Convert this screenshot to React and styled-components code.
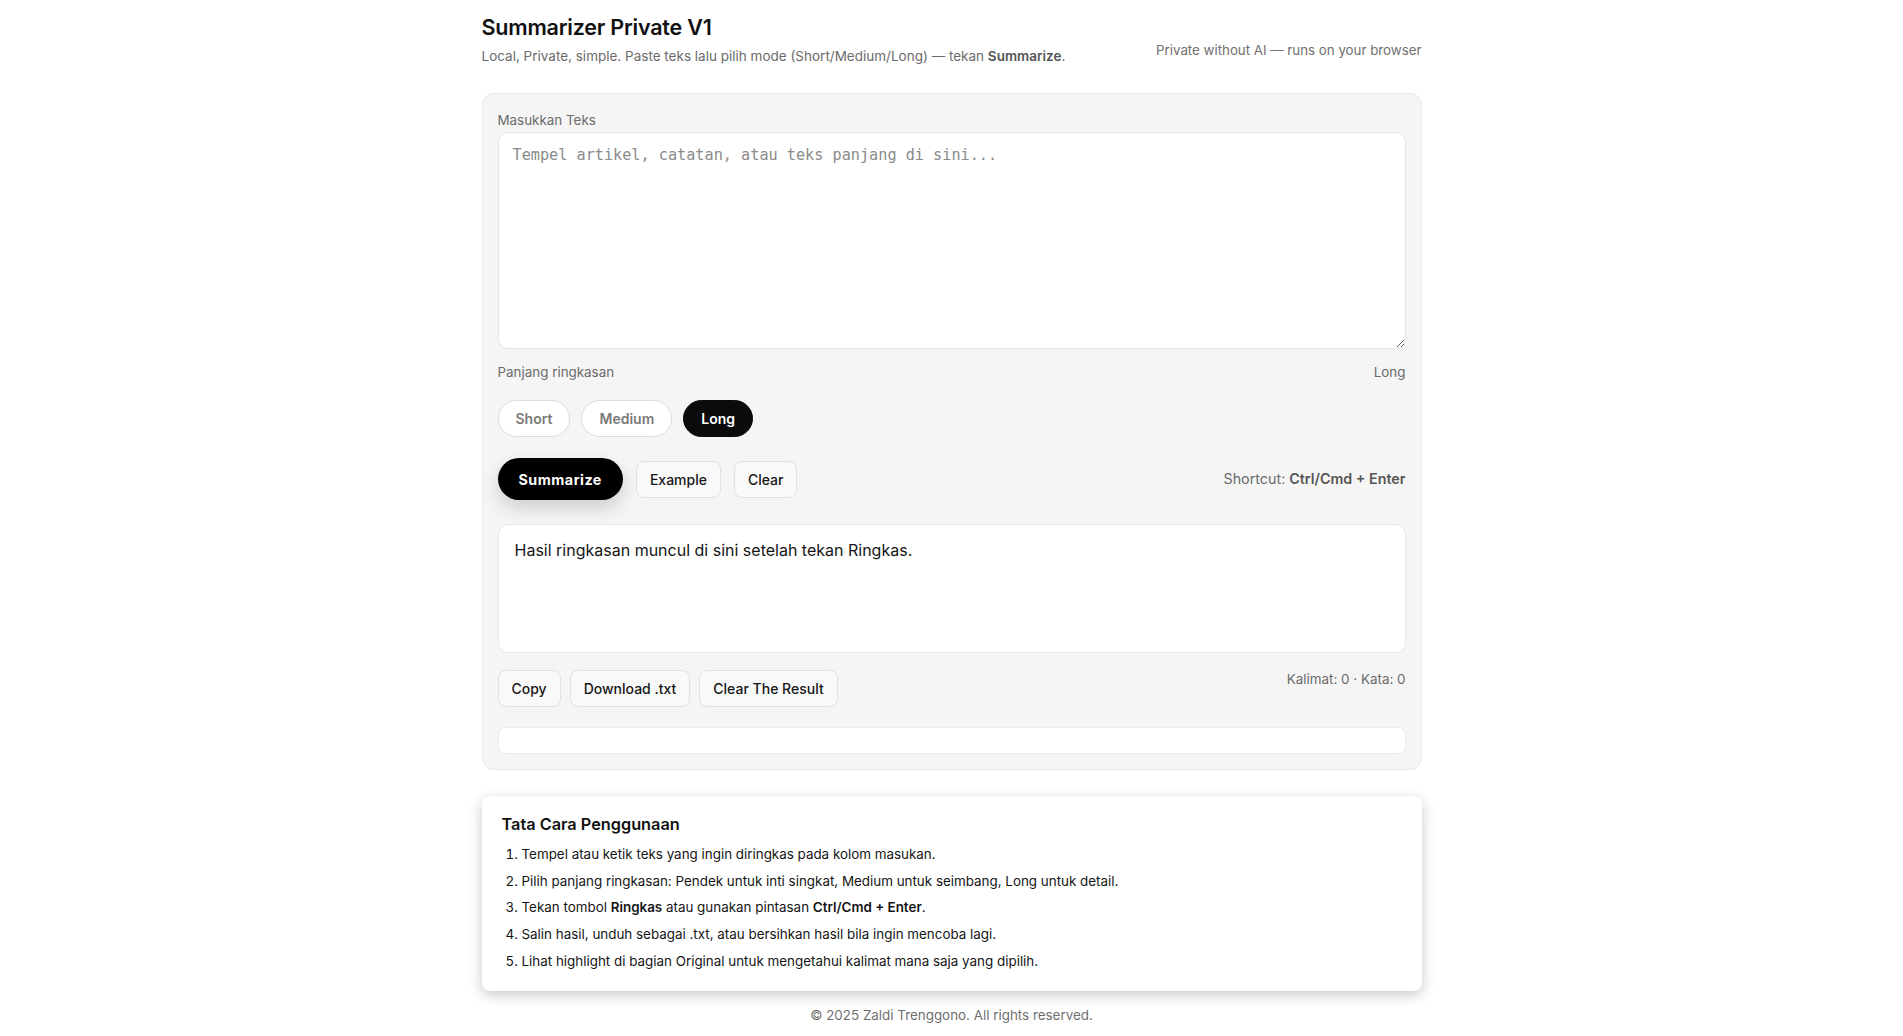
import React, { useState } from "react";
import styled, { createGlobalStyle } from "styled-components";

const GlobalStyle = createGlobalStyle`
  * { box-sizing: border-box; }
  body {
    margin: 0;
    background: #ffffff;
    color: #111111;
    font-family: Inter, "Noto Sans", "Liberation Sans", sans-serif;
  }
`;

const Page = styled.div`
  width: 940px;
  margin: 0 auto;
  padding: 14px 0 14px;
`;

const Header = styled.header`
  display: flex;
  justify-content: space-between;
  align-items: flex-end;
  margin-bottom: 28px;
`;

const Title = styled.h1`
  margin: 0 0 7px;
  font-size: 21.5px;
  line-height: 26px;
  font-weight: 600;
  letter-spacing: -0.2px;
`;

const Subtitle = styled.p`
  margin: 0;
  font-size: 13.5px;
  line-height: 18px;
  color: #6b6b6b;

  b {
    font-weight: 600;
    color: #555;
  }
`;

const Badge = styled.div`
  font-size: 13.3px;
  line-height: 18px;
  color: #707070;
  margin-bottom: 6px;
`;

const Panel = styled.section`
  background: #f5f5f5;
  border: 1px solid #e9e9e9;
  border-radius: 12px;
  padding: 17px 15px 15px;
`;

const Label = styled.label`
  display: block;
  font-size: 13.4px;
  line-height: 18px;
  color: #6b6b6b;
  margin-bottom: 3px;
`;

const Input = styled.textarea`
  display: block;
  width: 100%;
  height: 217px;
  resize: vertical;
  border: 1px solid #e4e4e4;
  border-radius: 10px;
  background: #fff;
  padding: 12px 14px;
  font-family: "DejaVu Sans Mono", "Liberation Mono", monospace;
  font-size: 15.2px;
  line-height: 20px;
  color: #111;
  outline: none;

  &::placeholder {
    color: #8a8a8a;
  }
`;

const Row = styled.div`
  display: flex;
  justify-content: space-between;
  align-items: ${p => p.$align || "center"};
  margin-top: ${p => p.$top || 0}px;
`;

const Muted = styled.span`
  font-size: ${p => p.$size || 13.4}px;
  line-height: 18px;
  color: #6b6b6b;

  b {
    font-weight: 600;
    color: #555;
  }
`;

const Group = styled.div`
  display: flex;
  align-items: center;
  gap: ${p => p.$gap || 10}px;
`;

const Pill = styled.button`
  height: 37px;
  padding: 0 17px;
  border-radius: 999px;
  font-family: inherit;
  font-size: 14px;
  font-weight: 600;
  cursor: pointer;
  border: 1px solid ${p => (p.$active ? "#0b0b0b" : "#dcdcdc")};
  background: ${p => (p.$active ? "#0b0b0b" : "#ffffff")};
  color: ${p => (p.$active ? "#ffffff" : "#7a7a7a")};
`;

const Primary = styled.button`
  height: 42px;
  padding: 0 21px;
  border: none;
  border-radius: 999px;
  background: #000;
  color: #fff;
  font-family: inherit;
  font-size: 14.3px;
  font-weight: 700;
  letter-spacing: 0.5px;
  box-shadow: 0 8px 18px rgba(0, 0, 0, 0.16);
  cursor: pointer;
`;

const Ghost = styled.button`
  height: 37px;
  padding: 0 13px;
  border: 1px solid #e1e1e1;
  border-radius: 8px;
  background: #f9f9f9;
  color: #161616;
  font-family: inherit;
  font-size: 14px;
  font-weight: 500;
  cursor: pointer;
`;

const Output = styled.div`
  margin-top: 24px;
  height: 129px;
  background: #fff;
  border: 1px solid #e9e9e9;
  border-radius: 10px;
  padding: 14px 16px;
  font-size: 16px;
  line-height: 22px;
  color: #151515;
`;

const Strip = styled.div`
  margin-top: 20px;
  height: 27px;
  background: #fff;
  border: 1px solid #ececec;
  border-radius: 8px;
`;

const Card = styled.section`
  margin-top: 26px;
  background: #fff;
  border-radius: 8px;
  box-shadow: 0 4px 14px rgba(0, 0, 0, 0.22);
  padding: 17px 20px 20px;
`;

const CardTitle = styled.h2`
  margin: 0 0 9px;
  font-size: 16.3px;
  line-height: 22px;
  font-weight: 600;
`;

const Steps = styled.ol`
  margin: 0;
  padding-left: 20px;
  font-size: 13.4px;
  line-height: 20px;
  color: #151515;

  li + li {
    margin-top: 6.7px;
  }

  b {
    font-weight: 600;
  }
`;

const Footer = styled.footer`
  margin-top: 15px;
  text-align: center;
  font-size: 13.4px;
  line-height: 18px;
  color: #707070;
`;

const modes = ["Short", "Medium", "Long"];

export default function App() {
  const [mode, setMode] = useState("Long");
  return (
    <Page>
      <GlobalStyle />
      <Header>
        <div>
          <Title>Summarizer Private V1</Title>
          <Subtitle>
            Local, Private, simple. Paste teks lalu pilih mode (Short/Medium/Long) — tekan <b>Summarize</b>.
          </Subtitle>
        </div>
        <Badge>Private without AI — runs on your browser</Badge>
      </Header>

      <Panel>
        <Label>Masukkan Teks</Label>
        <Input placeholder="Tempel artikel, catatan, atau teks panjang di sini..." />

        <Row $top={14}>
          <Muted>Panjang ringkasan</Muted>
          <Muted>{mode}</Muted>
        </Row>

        <Row $top={19}>
          <Group $gap={11}>
            {modes.map(m => (
              <Pill key={m} $active={m === mode} onClick={() => setMode(m)}>
                {m}
              </Pill>
            ))}
          </Group>
        </Row>

        <Row $top={21}>
          <Group $gap={13}>
            <Primary>Summarize</Primary>
            <Ghost>Example</Ghost>
            <Ghost>Clear</Ghost>
          </Group>
          <Muted $size={14.3}>
            Shortcut: <b>Ctrl/Cmd + Enter</b>
          </Muted>
        </Row>

        <Output>Hasil ringkasan muncul di sini setelah tekan Ringkas.</Output>

        <Row $top={17} $align="flex-start">
          <Group $gap={9}>
            <Ghost>Copy</Ghost>
            <Ghost>Download .txt</Ghost>
            <Ghost>Clear The Result</Ghost>
          </Group>
          <Muted>Kalimat: 0 · Kata: 0</Muted>
        </Row>

        <Strip />
      </Panel>

      <Card>
        <CardTitle>Tata Cara Penggunaan</CardTitle>
        <Steps>
          <li>Tempel atau ketik teks yang ingin diringkas pada kolom masukan.</li>
          <li>Pilih panjang ringkasan: Pendek untuk inti singkat, Medium untuk seimbang, Long untuk detail.</li>
          <li>
            Tekan tombol <b>Ringkas</b> atau gunakan pintasan <b>Ctrl/Cmd + Enter</b>.
          </li>
          <li>Salin hasil, unduh sebagai .txt, atau bersihkan hasil bila ingin mencoba lagi.</li>
          <li>Lihat highlight di bagian Original untuk mengetahui kalimat mana saja yang dipilih.</li>
        </Steps>
      </Card>

      <Footer>© 2025 Zaldi Trenggono. All rights reserved.</Footer>
    </Page>
  );
}
